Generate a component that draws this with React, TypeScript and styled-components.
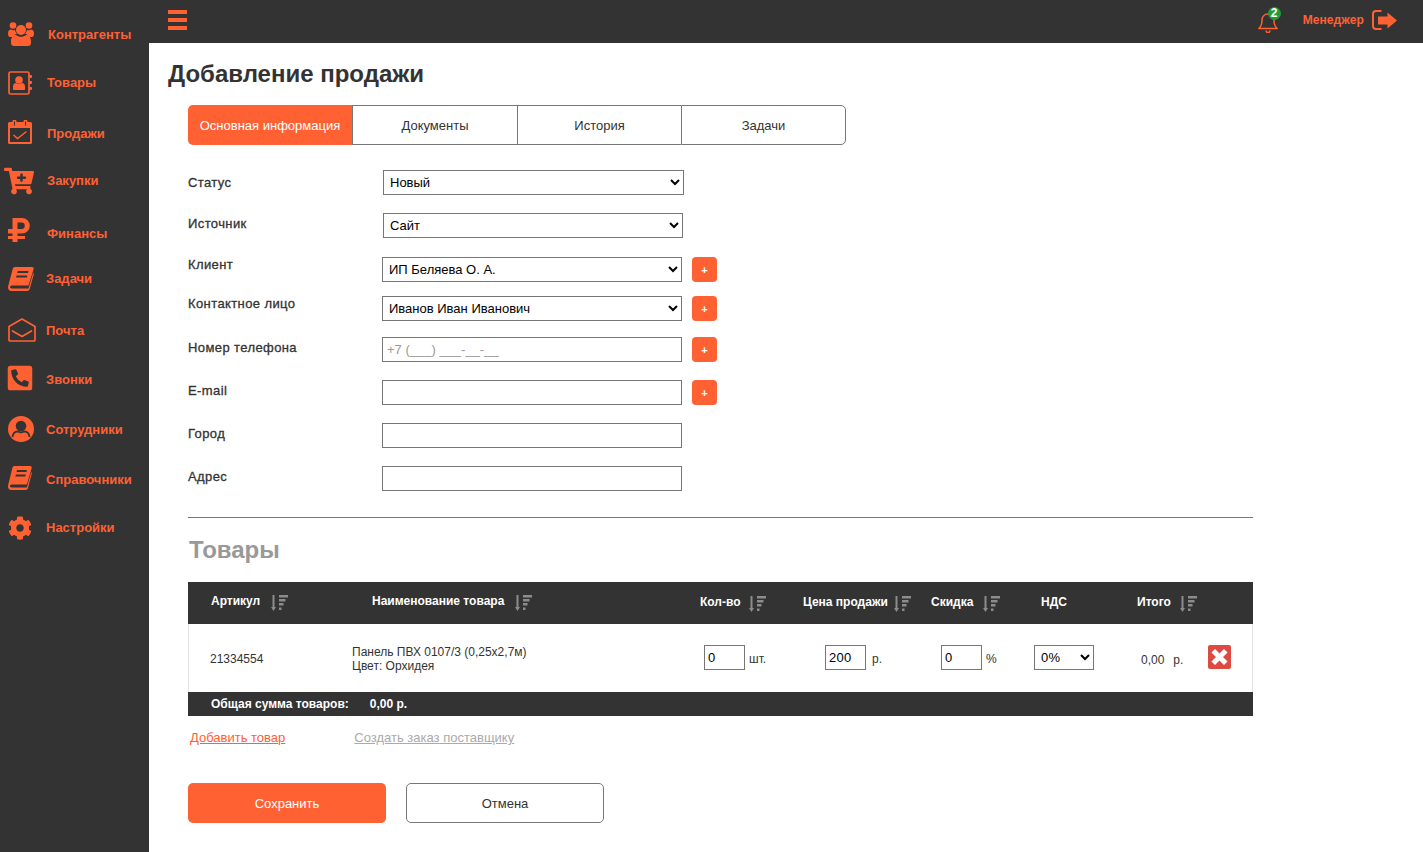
import React from 'react';
import styled, { createGlobalStyle } from 'styled-components';
import { FaCartPlus, FaPhoneSquareAlt, FaCog } from 'react-icons/fa';

const ORANGE = '#ff6133';
const DARK = '#333333';

const Global = createGlobalStyle`
  html, body { margin: 0; padding: 0; height: 100%; background: #fff; }
  body { font-family: "Liberation Sans", Arial, sans-serif; color: ${DARK}; }
  * { box-sizing: border-box; }
`;

const Page = styled.div`
  display: flex;
  width: 1423px;
  height: 852px;
  overflow: hidden;
`;

const Sidebar = styled.nav`
  width: 149px;
  flex: none;
  background: ${DARK};
  display: flex;
  flex-direction: column;
  padding-top: 10px;
`;

const NavItem = styled.a<{ $h: number; $gap: number; $ix: number }>`
  height: ${p => p.$h}px;
  display: flex;
  align-items: center;
  padding-left: ${p => p.$ix}px;
  color: ${ORANGE};
  svg { flex: none; margin-right: ${p => p.$gap}px; }
`;

const NavText = styled.span<{ $dy: number }>`
  font-size: 13px;
  font-weight: 700;
  margin-top: ${p => p.$dy * 2}px;
`;

const Main = styled.div`
  flex: 1;
  display: flex;
  flex-direction: column;
  min-width: 0;
`;

const TopBar = styled.header`
  height: 43px;
  flex: none;
  background: ${DARK};
  display: flex;
  align-items: center;
  padding: 0 26px 0 19px;
  color: ${ORANGE};
`;

const Burger = styled.div`
  display: flex;
  flex-direction: column;
  gap: 4px;
  width: 19px;
  margin-top: -3px;
  span { display: block; height: 4px; background: ${ORANGE}; }
`;

const TopRight = styled.div`
  margin-left: auto;
  display: flex;
  align-items: center;
`;

const Bell = styled.div`
  position: relative;
  width: 20px;
  height: 22px;
  margin-right: 25px;
  display: flex;
`;

const BellBadge = styled.span`
  position: absolute;
  top: -4px;
  left: 10px;
  width: 13px;
  height: 13px;
  border-radius: 50%;
  background: #1f9e36;
  color: #fff;
  font-size: 12px;
  font-weight: 700;
  line-height: 13px;
  text-align: center;
`;

const UserName = styled.span`
  font-size: 12px;
  font-weight: 700;
  letter-spacing: 0.1px;
  margin: -3px 8px 0 0;
`;

const ExitIcon = styled.svg`
  margin-top: -3px;
`;

const Content = styled.main`
  padding: 17px 0 0 19px;
`;

const Title = styled.h1`
  margin: 0 0 17px;
  font-size: 24px;
  line-height: 28px;
  font-weight: 700;
  color: ${DARK};
`;

const Body = styled.div`
  margin-left: 20px;
  width: 1065px;
`;

const Tabs = styled.div`
  display: flex;
  width: 658px;
  height: 40px;
`;

const Tab = styled.div<{ $active?: boolean; $w: number; $last?: boolean }>`
  width: ${p => p.$w}px;
  display: flex;
  align-items: center;
  justify-content: center;
  font-size: 13px;
  background: ${p => (p.$active ? ORANGE : '#fff')};
  color: ${p => (p.$active ? '#fff' : DARK)};
  border: ${p => (p.$active ? 'none' : '1px solid #777')};
  border-right: ${p => (p.$last ? '1px solid #777' : 'none')};
  border-radius: ${p => (p.$active ? '5px 0 0 5px' : p.$last ? '0 5px 5px 0' : '0')};
`;

const Form = styled.div`
  margin-top: 25px;
  display: flex;
  flex-direction: column;
`;

const Row = styled.div<{ $top: number }>`
  display: flex;
  height: 25px;
  margin-top: ${p => p.$top}px;
`;

const Label = styled.div<{ $dy: number; $w: number }>`
  width: ${p => p.$w}px;
  flex: none;
  font-size: 13px;
  line-height: 15px;
  letter-spacing: 0.4px;
  padding-top: ${p => p.$dy}px;
  color: ${DARK};
  -webkit-text-stroke: 0.3px ${DARK};
`;

const Select = styled.select<{ $w: number }>`
  width: ${p => p.$w}px;
  height: 25px;
  border: 1px solid #767676;
  border-radius: 0;
  background: #fff;
  padding: 0 0 0 2px;
  font: 13px "Liberation Sans", Arial, sans-serif;
  color: #000;
`;

const TextInput = styled.input`
  width: 300px;
  height: 25px;
  border: 1px solid #767676;
  border-radius: 0;
  padding: 0 4px;
  font: 13px "Liberation Sans", Arial, sans-serif;
  &::placeholder { color: #999; opacity: 1; }
`;

const PlusBtn = styled.button`
  width: 25px;
  height: 25px;
  margin-left: 10px;
  border: none;
  border-radius: 4px;
  background: ${ORANGE};
  color: #fff;
  font: 700 11px "Liberation Sans", Arial, sans-serif;
  padding: 0;
`;

const Divider = styled.hr`
  margin: 26px 0 0;
  border: none;
  border-top: 1px solid #777;
`;

const SectionTitle = styled.h2`
  margin: 18px 0 18px 1px;
  font-size: 24px;
  line-height: 28px;
  font-weight: 700;
  color: #999;
`;

const HeadRow = styled.div`
  height: 42px;
  background: ${DARK};
  display: flex;
  align-items: center;
  color: #fff;
  font-size: 12px;
  font-weight: 700;
`;

const HeadCell = styled.div<{ $w: number; $pad?: number; $dy?: number; $gap?: number }>`
  width: ${p => p.$w}px;
  padding-left: ${p => p.$pad ?? 0}px;
  flex: none;
  display: flex;
  align-items: center;
  margin-top: ${p => p.$dy ?? 0}px;
  svg { margin: 3px 0 0 ${p => p.$gap ?? 10}px; flex: none; }
`;

const DataRow = styled.div`
  height: 68px;
  display: flex;
  align-items: center;
  border-left: 1px solid #e4e4e4;
  border-right: 1px solid #e4e4e4;
  font-size: 12px;
  color: ${DARK};
`;

const DataCell = styled.div<{ $w: number; $pad?: number; $dy?: number }>`
  width: ${p => p.$w}px;
  padding-left: ${p => p.$pad ?? 0}px;
  margin-top: ${p => p.$dy ?? 0}px;
  flex: none;
  display: flex;
  align-items: center;
`;

const ProductName = styled.div`
  line-height: 14px;
  margin-top: 2px;
`;

const SmallInput = styled.input`
  width: 41px;
  height: 25px;
  border: 1px solid #767676;
  border-radius: 0;
  padding: 0 3px;
  margin-top: -1px;
  font: 13px "Liberation Sans", Arial, sans-serif;
  letter-spacing: 0.3px;
  color: #000;
`;

const Unit = styled.span<{ $gap: number; $dy?: number }>`
  margin-left: ${p => p.$gap}px;
  margin-top: ${p => p.$dy ?? 2}px;
`;

const VatSelect = styled.select`
  width: 60px;
  height: 25px;
  margin-top: -1px;
  border: 1px solid #767676;
  border-radius: 0;
  background: #fff;
  padding: 0 0 0 2px;
  font: 13px "Liberation Sans", Arial, sans-serif;
  letter-spacing: 0.3px;
  color: #000;
`;

const RemoveIcon = styled.svg`
  display: block;
  margin-top: -2px;
`;

const FootRow = styled.div`
  height: 24px;
  background: ${DARK};
  color: #fff;
  display: flex;
  align-items: center;
  padding-left: 23px;
  font-size: 12px;
  font-weight: 700;
`;

const FootTotal = styled.span`
  margin-left: 21px;
`;

const Links = styled.div`
  display: flex;
  margin-top: 14px;
  padding-left: 2px;
  font-size: 13px;
  line-height: 15px;
`;

const LinkText = styled.a<{ $muted?: boolean }>`
  color: ${p => (p.$muted ? '#aaa' : ORANGE)};
  text-decoration: underline;
  margin-right: 69px;
`;

const Actions = styled.div`
  display: flex;
  gap: 20px;
  margin-top: 38px;
`;

const ActionBtn = styled.button<{ $primary?: boolean }>`
  width: 198px;
  height: 40px;
  border-radius: 5px;
  border: ${p => (p.$primary ? 'none' : '1px solid #777')};
  background: ${p => (p.$primary ? ORANGE : '#fff')};
  color: ${p => (p.$primary ? '#fff' : DARK)};
  font: 13px "Liberation Sans", Arial, sans-serif;
`;

const UsersIcon = () => (
  <svg width="26" height="24" viewBox="0 0 26 24" fill="currentColor">
    <circle cx="13" cy="8" r="5" />
    <circle cx="5" cy="3.5" r="3.3" />
    <circle cx="21" cy="3.5" r="3.3" />
    <path d="M0 11.5C0 8.5 1.5 7.5 3 7.5c1 1 3 1 4 .2.2 1.6 1 3 2 4C7 12.2 5.6 13.500 5 15H2c-1.300 0-2-1.500-2-3.500z" />
    <path d="M26 11.500c0-3-1.500-4-3-4-1 1-3 1-4 .2-.2 1.600-1 3-2 4 2 .5 3.400 1.800 4 3.300h3c1.300 0 2-1.500 2-3.500z" />
    <path d="M8 13c1.300 1.200 3 1.800 5 1.800s3.700-.6 5-1.800c3 0 5 2.500 5 6.500v1.500c0 1.800-1.200 3-3 3H6c-1.800 0-3-1.200-3-3v-1.500C3 15.500 5 13 8 13z" />
  </svg>
);

const AddressIcon = () => (
  <svg width="24" height="24" viewBox="0 0 24 24" fill="currentColor">
    <rect x="1" y="1" width="20" height="22" rx="1.500" fill="none" stroke="currentColor" strokeWidth="1.700" />
    <circle cx="11" cy="9" r="3.800" />
    <path d="M5 18v-2.500c0-2 1.200-3.300 3-3.500 1.800 1.300 4.200 1.300 6 0 1.800.2 3 1.500 3 3.500V18c0 .6-.4 1-1 1H6c-.6 0-1-.4-1-1z" />
    <rect x="21" y="4" width="3" height="3" rx="1" />
    <rect x="21" y="10" width="3" height="3" rx="1" />
    <rect x="21" y="16" width="3" height="3" rx="1" />
  </svg>
);

const CalendarIcon = () => (
  <svg width="24" height="24" viewBox="0 0 24 24" fill="currentColor">
    <path fillRule="evenodd" d="M1.500 2H4.500V1.500a1.500 1.500 0 0 1 4 0V2H15.500V1.500a1.500 1.500 0 0 1 4 0V2H22.500A1.500 1.500 0 0 1 24 3.500V22.500A1.500 1.500 0 0 1 22.500 24H1.500A1.500 1.500 0 0 1 0 22.500V3.500A1.500 1.500 0 0 1 1.500 2ZM2 8V22H22V8ZM6 1.500V5.500H7V1.500ZM17 1.500V5.500H18V1.500Z" />
    <path d="M5.500 15l4 3.500 9-7" fill="none" stroke="currentColor" strokeWidth="1.500" />
  </svg>
);

const RubleIcon = () => (
  <svg width="22" height="24" viewBox="0 0 22 24" fill="currentColor">
    <path fillRule="evenodd" d="M4.500 0H14a7.800 7.800 0 0 1 0 15.600H9.500V18H17V21H9.500V24H4.500V21H0V18H4.500V15.600H0V11H4.500ZM9.500 4.500V11H13.500a3.250 3.250 0 0 0 0-6.500Z" />
  </svg>
);

const BookIcon = ({ w }: { w: number }) => (
  <svg width={w} height="24" viewBox="0 0 26 24" preserveAspectRatio="none" fill="currentColor">
    <path d="M7 0H24c1.500 0 2 1 1.600 2.200L20.500 18.500H4c-2.500 0-2.500 3 0 3H20.500L25 6.500h1L21.700 22c-.4 1.300-1.200 2-2.700 2H3.500C1.200 24 0 22.300 0 20.500c0-.8.100-1.500.4-2.300L4.700 2C5 .8 5.800 0 7 0z" />
    <path d="M9.800 4H20.500L20 6H9.200ZM8.600 8.500H19.300L18.800 10.500H8Z" fill="#333" />
  </svg>
);

const EnvelopeIcon = () => (
  <svg width="28" height="24" viewBox="0 0 28 24" fill="none" stroke="currentColor" strokeWidth="1.700" strokeLinejoin="round">
    <path d="M1 8.500 14 1l13 7.500V22a1 1 0 0 1-1 1H2a1 1 0 0 1-1-1Z" />
    <path d="M4.500 13 14 18.500 23.500 13" strokeLinecap="round" />
  </svg>
);

const UserCircleIcon = () => (
  <svg width="26" height="26" viewBox="0 0 26 26">
    <circle cx="13" cy="13" r="13" fill="currentColor" />
    <circle cx="13" cy="10" r="5.300" fill="#333" />
    <path d="M4.500 21c.4-3.500 2.600-5.500 5.300-5.700 2 1.400 4.400 1.400 6.400 0 2.700.2 4.900 2.200 5.300 5.700" fill="none" stroke="#333" strokeWidth="1.800" />
  </svg>
);

const BellIcon = () => (
  <svg width="20" height="22" viewBox="0 0 20 22" fill="none" stroke="currentColor" strokeWidth="1.500" strokeLinejoin="round">
    <path d="M.8 17.500C3.500 15 4 12.500 4 9.500 4 5.500 6.500 3 10 3s6 2.500 6 6.500c0 3 .5 5.500 3.200 8Z" />
    <path d="M8 19.500a2 2 0 0 0 4 0" />
  </svg>
);

const Sort = () => (
  <svg width="17" height="16" viewBox="0 0 17 16" fill="#8c8c8c">
    <path d="M1.500 0H3.500V12H5L2.500 16 0 12H1.500Z" />
    <rect x="8" y="0" width="9" height="2.500" />
    <rect x="8" y="4" width="6.500" height="2.500" />
    <rect x="8" y="8" width="4.500" height="2.500" />
    <rect x="8" y="12.500" width="2.500" height="2.500" />
  </svg>
);

const nav = [
  { t: 'Контрагенты', i: <UsersIcon />, h: 48, ix: 8, gap: 14, dy: 0 },
  { t: 'Товары', i: <AddressIcon />, h: 50, ix: 8, gap: 15, dy: -1 },
  { t: 'Продажи', i: <CalendarIcon />, h: 48, ix: 8, gap: 15, dy: 1 },
  { t: 'Закупки', i: <FaCartPlus size={30} />, h: 50, ix: 4, gap: 13, dy: -1 },
  { t: 'Финансы', i: <RubleIcon />, h: 48, ix: 8, gap: 17, dy: 3 },
  { t: 'Задачи', i: <BookIcon w={26} />, h: 50, ix: 8, gap: 12, dy: -1 },
  { t: 'Почта', i: <EnvelopeIcon />, h: 52, ix: 8, gap: 10, dy: 0 },
  { t: 'Звонки', i: <FaPhoneSquareAlt size={28} />, h: 44, ix: 6, gap: 12, dy: 1 },
  { t: 'Сотрудники', i: <UserCircleIcon />, h: 58, ix: 8, gap: 12, dy: 0 },
  { t: 'Справочники', i: <BookIcon w={24} />, h: 40, ix: 8, gap: 14, dy: 1 },
  { t: 'Настройки', i: <FaCog size={24} />, h: 60, ix: 8, gap: 14, dy: -1 },
];

export default function App() {
  return (
    <Page>
      <Global />
      <Sidebar>
        {nav.map(n => (
          <NavItem key={n.t} $h={n.h} $ix={n.ix} $gap={n.gap}>
            {n.i}
            <NavText $dy={n.dy}>{n.t}</NavText>
          </NavItem>
        ))}
      </Sidebar>
      <Main>
        <TopBar>
          <Burger><span /><span /><span /></Burger>
          <TopRight>
            <Bell>
              <BellIcon />
              <BellBadge>2</BellBadge>
            </Bell>
            <UserName>Менеджер</UserName>
            <ExitIcon width="25" height="20" viewBox="0 0 25 20">
              <path d="M9.500 1H4C2.300 1 1 2.300 1 4V16C1 17.700 2.300 19 4 19H9.500" fill="none" stroke="currentColor" strokeWidth="2" />
              <path d="M6 6.500H15.500V2.500L25 10.500 15.500 18.500V14.500H6Z" fill="currentColor" />
            </ExitIcon>
          </TopRight>
        </TopBar>
        <Content>
          <Title>Добавление продажи</Title>
          <Body>
            <Tabs>
              <Tab $active $w={164}>Основная информация</Tab>
              <Tab $w={165}>Документы</Tab>
              <Tab $w={164}>История</Tab>
              <Tab $w={165} $last>Задачи</Tab>
            </Tabs>
            <Form>
              <Row $top={0}>
                <Label $w={195} $dy={5}>Статус</Label>
                <Select $w={301}><option>Новый</option></Select>
              </Row>
              <Row $top={18}>
                <Label $w={195} $dy={3}>Источник</Label>
                <Select $w={300}><option>Сайт</option></Select>
              </Row>
              <Row $top={19}>
                <Label $w={194} $dy={0}>Клиент</Label>
                <Select $w={300}><option>ИП Беляева О. А.</option></Select>
                <PlusBtn>+</PlusBtn>
              </Row>
              <Row $top={14}>
                <Label $w={194} $dy={0}>Контактное лицо</Label>
                <Select $w={300}><option>Иванов Иван Иванович</option></Select>
                <PlusBtn>+</PlusBtn>
              </Row>
              <Row $top={16}>
                <Label $w={194} $dy={3}>Номер телефона</Label>
                <TextInput placeholder="+7 (___) ___-__-__" />
                <PlusBtn>+</PlusBtn>
              </Row>
              <Row $top={18}>
                <Label $w={194} $dy={3}>E-mail</Label>
                <TextInput />
                <PlusBtn>+</PlusBtn>
              </Row>
              <Row $top={18}>
                <Label $w={194} $dy={3}>Город</Label>
                <TextInput />
              </Row>
              <Row $top={18}>
                <Label $w={194} $dy={3}>Адрес</Label>
                <TextInput />
              </Row>
            </Form>
            <Divider />
            <SectionTitle>Товары</SectionTitle>
            <HeadRow>
              <HeadCell $w={184} $pad={23} $dy={-4} $gap={11}>Артикул<Sort /></HeadCell>
              <HeadCell $w={328} $dy={-4} $gap={11}>Наименование товара<Sort /></HeadCell>
              <HeadCell $w={103} $dy={-2} $gap={8}>Кол-во<Sort /></HeadCell>
              <HeadCell $w={128} $dy={-2} $gap={6}>Цена продажи<Sort /></HeadCell>
              <HeadCell $w={110} $dy={-2} $gap={10}>Скидка<Sort /></HeadCell>
              <HeadCell $w={96} $dy={-2}>НДС</HeadCell>
              <HeadCell $w={90} $dy={-2} $gap={9}>Итого<Sort /></HeadCell>
            </HeadRow>
            <DataRow>
              <DataCell $w={163} $pad={21} $dy={2}>21334554</DataCell>
              <DataCell $w={352}><ProductName>Панель ПВХ 0107/3 (0,25х2,7м)<br />Цвет: Орхидея</ProductName></DataCell>
              <DataCell $w={121}><SmallInput defaultValue="0" /><Unit $gap={4}>шт.</Unit></DataCell>
              <DataCell $w={116}><SmallInput defaultValue="200" /><Unit $gap={6}>р.</Unit></DataCell>
              <DataCell $w={93}><SmallInput defaultValue="0" /><Unit $gap={4}>%</Unit></DataCell>
              <DataCell $w={107}><VatSelect><option>0%</option></VatSelect></DataCell>
              <DataCell $w={67} $dy={4}>0,00<Unit $gap={9} $dy={0}>р.</Unit></DataCell>
              <DataCell $w={30}>
                <RemoveIcon width="23" height="24" viewBox="0 0 23 24">
                  <rect width="23" height="24" rx="2" fill="#dc4a41" />
                  <path d="M7 7.500 16 16.500M16 7.500 7 16.500" stroke="#fff" strokeWidth="5" strokeLinecap="square" />
                </RemoveIcon>
              </DataCell>
            </DataRow>
            <FootRow>Общая сумма товаров:<FootTotal>0,00 р.</FootTotal></FootRow>
            <Links>
              <LinkText>Добавить товар</LinkText>
              <LinkText $muted>Создать заказ поставщику</LinkText>
            </Links>
            <Actions>
              <ActionBtn $primary>Сохранить</ActionBtn>
              <ActionBtn>Отмена</ActionBtn>
            </Actions>
          </Body>
        </Content>
      </Main>
    </Page>
  );
}
